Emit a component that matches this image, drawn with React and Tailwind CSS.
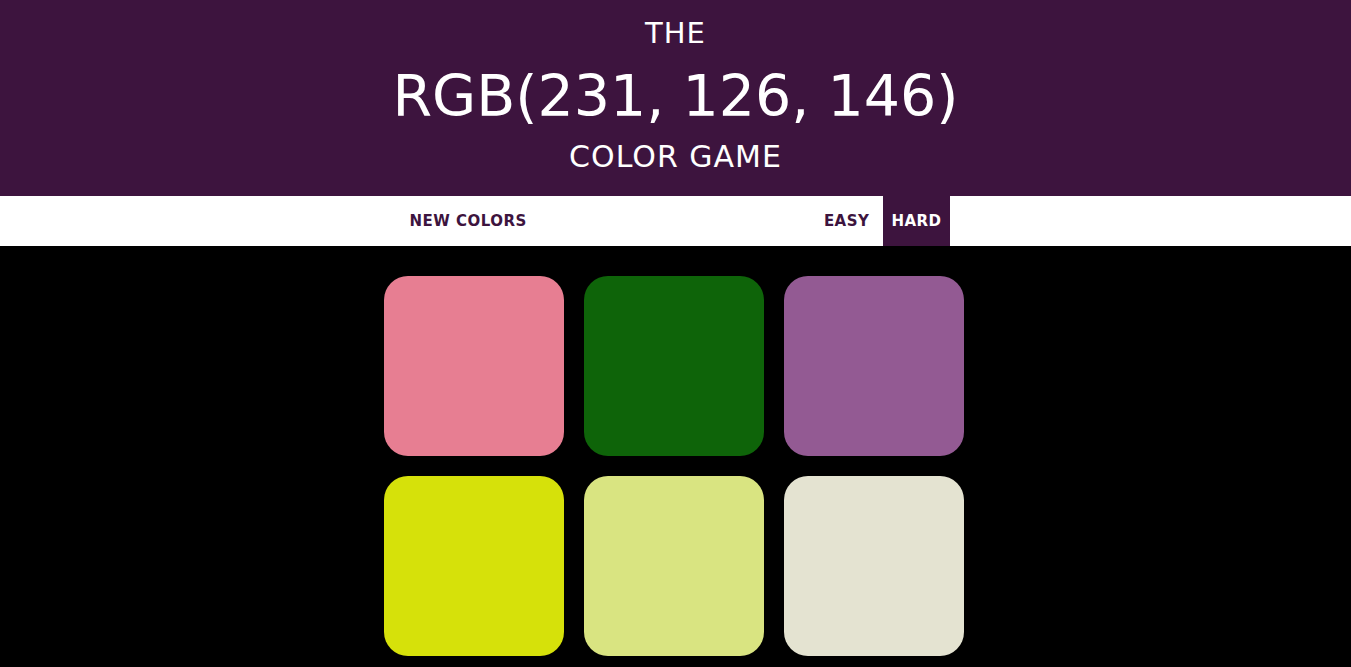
import React, { useState } from 'react';

const COLORS = [
    'rgb(231, 126, 146)',
    'rgb(14, 100, 9)',
    'rgb(147, 90, 147)',
    'rgb(214, 225, 10)',
    'rgb(217, 228, 129)',
    'rgb(228, 227, 209)',
];

const App = () => {
    const [mode, setMode] = useState('hard');
    const target = COLORS[0];

    return (
        <div className="min-h-screen bg-black" style={{ fontFamily: '"DejaVu Sans", sans-serif' }}>
            {/* Header */}
            <header className="h-[196px] bg-[#3d143e] text-white flex flex-col items-center pt-[14px] font-['Comic_Sans_MS','DejaVu_Sans',sans-serif]">
                <span className="text-[29px] leading-[38px] tracking-[1px]">THE</span>
                <span className="text-[57px] leading-[88px]">{target.toUpperCase()}</span>
                <span className="text-[30px] leading-[34px] tracking-[1px]">COLOR GAME</span>
            </header>

            {/* Stripe */}
            <nav className="h-[50px] bg-white flex justify-center items-stretch">
                <button className="px-2 text-[15px] font-bold text-[#3d143e] tracking-[0.5px]">NEW COLORS</button>
                <span className="w-[281px]"></span>
                <button
                    onClick={() => setMode('easy')}
                    className={`px-2 mr-[6px] text-[15px] font-bold tracking-[0.5px] ${mode === 'easy' ? 'bg-[#3d143e] text-white' : 'text-[#3d143e]'}`}
                >
                    EASY
                </button>
                <button
                    onClick={() => setMode('hard')}
                    className={`px-2 text-[15px] font-bold tracking-[0.5px] ${mode === 'hard' ? 'bg-[#3d143e] text-white' : 'text-[#3d143e]'}`}
                >
                    HARD
                </button>
            </nav>

            {/* Squares */}
            <div className="w-[604px] mx-auto pr-[4px] pt-[20px] grid grid-cols-3">
                {COLORS.map((c) => (
                    <div key={c} className="p-[10px]">
                        <div className="w-[180px] h-[180px] rounded-[24px]" style={{ background: c }}></div>
                    </div>
                ))}
            </div>
        </div>
    );
};

export default App;
